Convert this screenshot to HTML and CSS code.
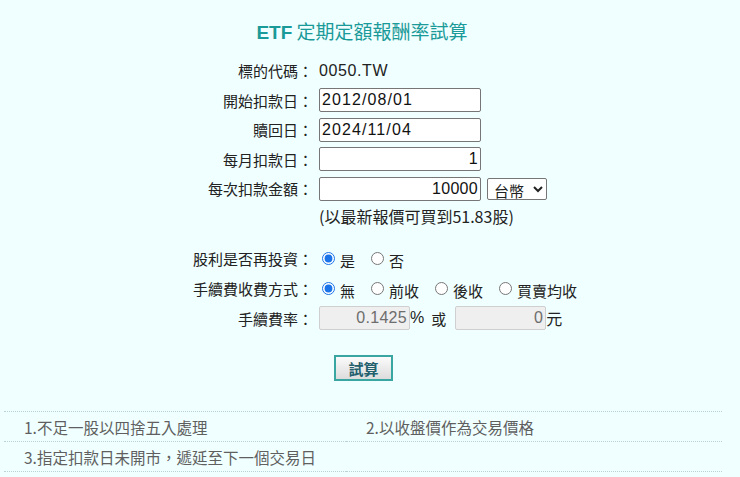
FILE: index.html
```html
<!DOCTYPE html>
<html lang="zh-Hant">
<head>
<meta charset="utf-8">
<title>ETF 定期定額報酬率試算</title>
<link rel="stylesheet" href="styles.css">
</head>
<body>
<div class="page">
  <h1 class="title"><span class="title-en">ETF</span> 定期定額報酬率試算</h1>
  <div class="form">
    <div class="label">標的代碼：</div>
    <div class="value code">0050.TW</div>

    <div class="label">開始扣款日：</div>
    <div class="value"><input class="field" type="text" value="2012/08/01"></div>

    <div class="label">贖回日：</div>
    <div class="value"><input class="field" type="text" value="2024/11/04"></div>

    <div class="label">每月扣款日：</div>
    <div class="value"><input class="field num" type="text" value="1"></div>

    <div class="label">每次扣款金額：</div>
    <div class="value"><input class="field num" type="text" value="10000"><select class="currency"><option>台幣</option></select></div>

    <div class="label"></div>
    <div class="value note">(以最新報價可買到51.83股)</div>

    <div class="spacer"></div>

    <div class="label">股利是否再投資：</div>
    <div class="value radios">
      <label class="opt"><input type="radio" name="div" checked><span>是</span></label>
      <label class="opt"><input type="radio" name="div"><span>否</span></label>
    </div>

    <div class="label">手續費收費方式：</div>
    <div class="value radios">
      <label class="opt"><input type="radio" name="fee" checked><span>無</span></label>
      <label class="opt"><input type="radio" name="fee"><span>前收</span></label>
      <label class="opt"><input type="radio" name="fee"><span>後收</span></label>
      <label class="opt"><input type="radio" name="fee"><span>買賣均收</span></label>
    </div>

    <div class="label">手續費率：</div>
    <div class="value"><input class="small num" type="text" value="0.1425" disabled><span class="unit">%</span><span class="or">或</span><input class="small num" type="text" value="0" disabled><span class="unit">元</span></div>
  </div>
  <div class="actions"><button class="btn" type="button">試算</button></div>
  <div class="notes">
    <div class="note-cell">1.不足一股以四捨五入處理</div>
    <div class="note-cell">2.以收盤價作為交易價格</div>
    <div class="note-cell">3.指定扣款日未開市，遞延至下一個交易日</div>
    <div class="note-cell"></div>
  </div>
</div>
</body>
</html>
```

FILE: styles.css
```css
html, body {
  margin: 0;
  padding: 0;
  background: #f0ffff;
}
body {
  font-family: "Liberation Sans", Arial, "Noto Sans CJK TC", sans-serif;
  color: #222;
  font-size: 15px;
}
.page {
  width: 724px;
}
.title {
  margin: 0;
  padding-top: 20px;
  height: 36px;
  line-height: 22px;
  text-align: center;
  font-size: 19px;
  font-weight: normal;
  color: #1a9a98;
  font-family: "Noto Sans CJK TC", sans-serif;
}
.title-en {
  font-family: "Liberation Sans", Arial, sans-serif;
  font-weight: bold;
}
.form {
  display: grid;
  grid-template-columns: 313px 1fr;
  grid-template-rows: 29.5px 29.5px 29.5px 29.5px 29.5px 26.5px 13px 30px 30px 30px;
  column-gap: 6px;
}
.label {
  display: flex;
  align-items: center;
  justify-content: flex-end;
  font-family: "Noto Sans CJK TC", sans-serif;
  font-size: 15px;
  color: #222;
}
.value {
  display: flex;
  align-items: center;
}
.code {
  font-size: 16px;
  letter-spacing: 0.6px;
}
.field {
  box-sizing: border-box;
  width: 162px;
  height: 24px;
  border: 1px solid #767676;
  border-radius: 2px;
  background: #fff;
  padding: 0 2px;
  font-family: "Liberation Sans", Arial, sans-serif;
  font-size: 16px;
  letter-spacing: 1.1px;
  color: #111;
}
.num {
  text-align: right;
  letter-spacing: 0.3px;
}
.currency {
  margin-left: 6px;
  height: 22px;
  width: 60px;
  font-family: "Noto Sans CJK TC", sans-serif;
  font-size: 15px;
  border: 1px solid #767676;
  border-radius: 2px;
  background: #fff;
  padding: 0 0 0 2px;
  color: #222;
}
.note {
  font-family: "Noto Sans CJK TC", sans-serif;
  font-size: 16px;
  padding-bottom: 2px;
}
.spacer {
  grid-column: 1 / span 2;
}
.radios {
  gap: 13px;
}
.opt {
  display: inline-flex;
  align-items: center;
  font-family: "Noto Sans CJK TC", sans-serif;
  font-size: 15px;
}
.opt input {
  margin: 0 5px 0 3px;
  width: 13px;
  height: 13px;
  accent-color: #1a73e8;
}
.opt span {
  position: relative;
  top: 2px;
}
.small {
  box-sizing: border-box;
  width: 91px;
  height: 24px;
  border: 1px solid #cfcfcf;
  background: #efefef;
  border-radius: 2px;
  padding: 0 2px;
  font-family: "Liberation Sans", Arial, sans-serif;
  font-size: 16px;
  color: #6d6d6d;
}
.unit {
  font-family: "Liberation Sans", Arial, "Noto Sans CJK TC", sans-serif;
  font-size: 16px;
}
.or {
  font-family: "Noto Sans CJK TC", sans-serif;
  font-size: 15px;
  margin: 0 9px 0 7px;
}
.actions {
  box-sizing: border-box;
  display: flex;
  padding-left: 334px;
  padding-top: 22px;
  height: 78px;
}
.btn {
  box-sizing: border-box;
  width: 59px;
  height: 26px;
  border: 2px solid #3aa6a2;
  background: linear-gradient(#fbfbfb, #dcdcdc);
  font-family: "Noto Sans CJK TC", sans-serif;
  font-size: 15px;
  font-weight: bold;
  color: #23606e;
  padding: 0;
  cursor: pointer;
}
.notes {
  margin-left: 4px;
  width: 718px;
  display: grid;
  grid-template-columns: 342px 1fr;
  border-top: 1px dotted #b9d3d6;
}
.note-cell {
  box-sizing: border-box;
  height: 30px;
  border-bottom: 1px dotted #b9d3d6;
  display: flex;
  align-items: center;
  padding-left: 20px;
  font-family: "Noto Sans CJK TC", sans-serif;
  font-size: 15.5px;
  color: #5f5f5f;
}
```
